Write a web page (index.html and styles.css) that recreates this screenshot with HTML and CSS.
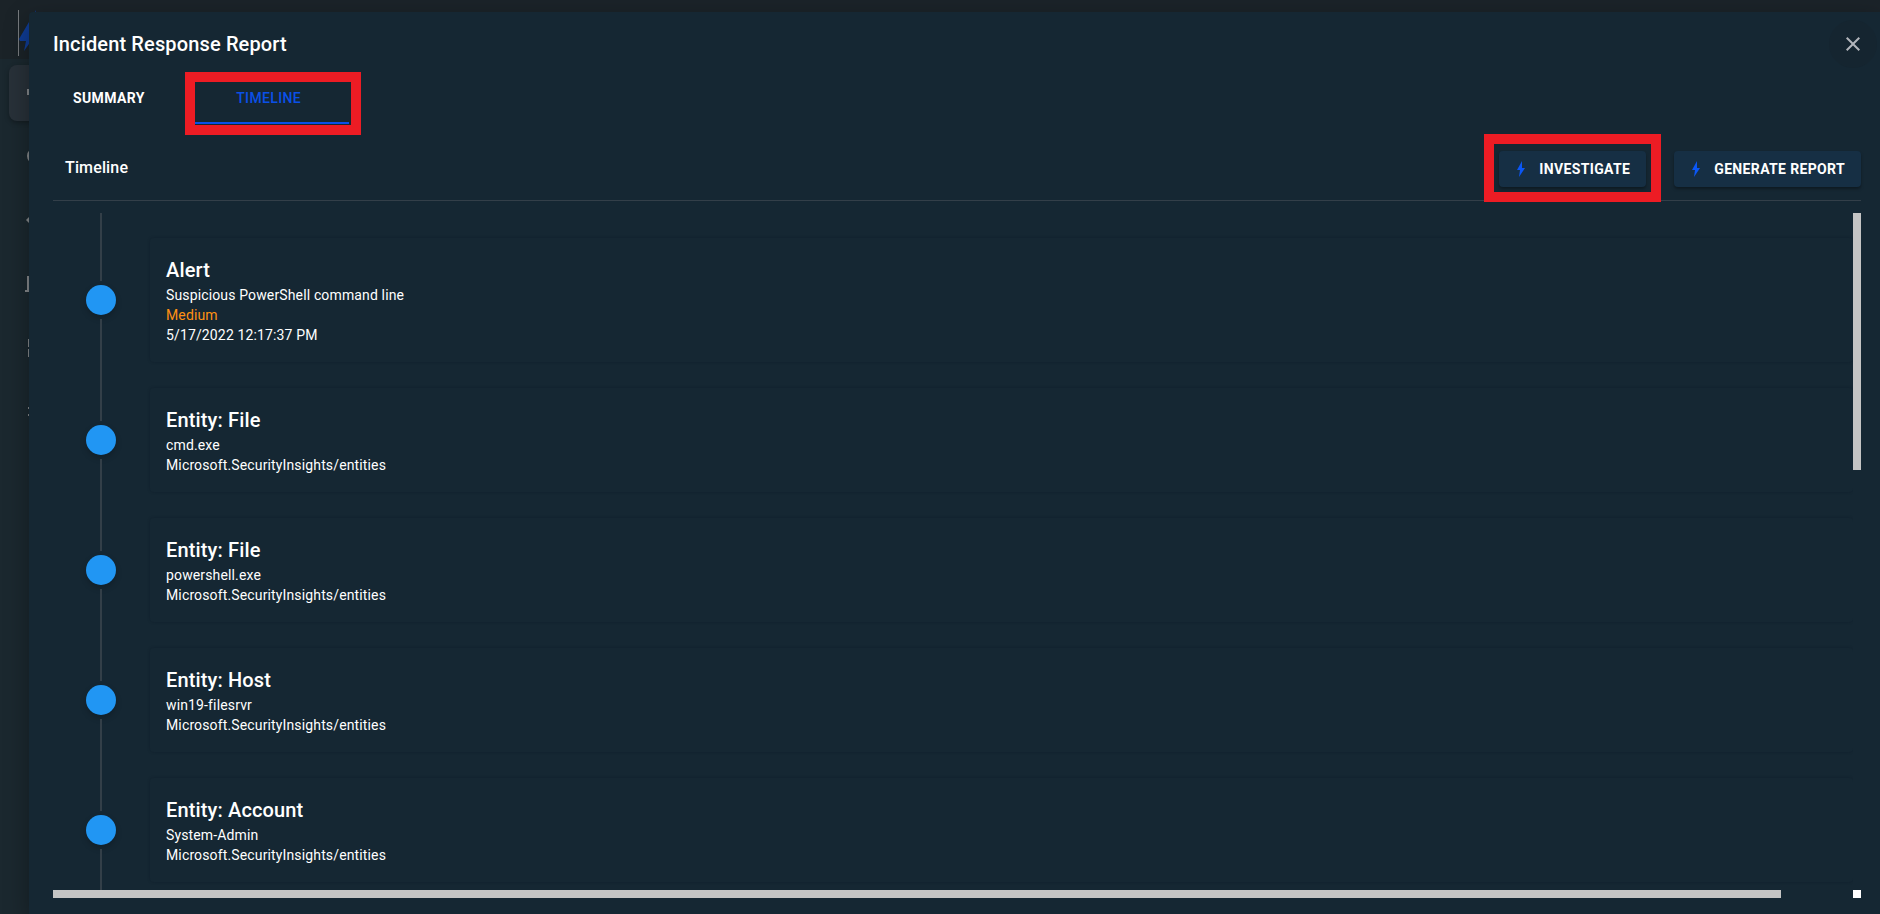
FILE: index.html
```html
<!DOCTYPE html>
<html lang="en">
  <head>
    <meta charset="UTF-8" />
    <meta name="viewport" content="width=device-width, initial-scale=1.0" />
    <title>Incident Response Report</title>
    <link rel="stylesheet" href="styles.css">
  </head>
  <body>
    <!-- App shell behind the dialog -->
    <aside class="sidebar">
      <div class="brand">
        <svg width="24" height="46" viewBox="0 0 24 46"><path d="M17 0 0 29l1 2h6L5 41l17-24h-8z" fill="#0f3c95" /></svg>
      </div>
      <nav class="side-nav">
        <a class="side-link active" href="#" aria-label="Home">
          <svg viewBox="0 0 24 24"><path d="M2 8h20v6H2z" /></svg>
        </a>
        <a class="side-link" href="#" aria-label="Search">
          <svg viewBox="0 0 24 24"><circle cx="10" cy="11" r="7" fill="none" stroke="currentColor" stroke-width="2" /><path d="M15 15l6 6-1 1-6-6z" /></svg>
        </a>
        <a class="side-link" href="#" aria-label="Response">
          <svg viewBox="0 0 24 24"><path d="M1 11l3-3h16l3 3-3 3H4z" /></svg>
        </a>
        <a class="side-link" href="#" aria-label="Reports">
          <svg viewBox="0 0 24 24"><path d="M2 3h20v14h2v2H0v-2h2z" /></svg>
        </a>
        <a class="side-link" href="#" aria-label="Dashboard">
          <svg viewBox="0 0 24 24"><path d="M3 2h8v8H3zm10 0h8v8h-8zM3 12h8v8H3zm10 0h8v8h-8z" /></svg>
        </a>
        <a class="side-link" href="#" aria-label="Settings">
          <svg viewBox="0 0 24 24"><path d="M3 6h3v2H3zm5 0h13v2H8zM3 13h3v2H3zm5 0h13v2H8z" /></svg>
        </a>
      </nav>
    </aside>

    <main class="dialog" role="dialog" aria-labelledby="dialogTitle">
      <header class="dialog-header">
        <h1 id="dialogTitle">Incident Response Report</h1>
        <button type="button" class="close-button" aria-label="Close">
          <svg viewBox="0 0 24 24"><path d="M19 6.41 17.59 5 12 10.59 6.41 5 5 6.41 10.59 12 5 17.59 6.41 19 12 13.41 17.59 19 19 17.59 13.41 12z" /></svg>
        </button>
      </header>

      <div class="tabs" role="tablist">
        <button type="button" class="tab" role="tab" aria-selected="false">SUMMARY</button>
        <div class="marked">
          <button type="button" class="tab selected" role="tab" aria-selected="true">TIMELINE</button>
          <span class="mark mark-tab"></span>
        </div>
      </div>

      <div class="toolbar">
        <h2>Timeline</h2>
        <div class="actions">
          <div class="marked">
            <button type="button" class="button">
              <svg viewBox="0 0 12 16"><path d="M7 0 2 9h3L4 16l6-9H7z" /></svg>
              INVESTIGATE
            </button>
            <span class="mark mark-button"></span>
          </div>
          <button type="button" class="button">
            <svg viewBox="0 0 12 16"><path d="M7 0 2 9h3L4 16l6-9H7z" /></svg>
            GENERATE REPORT
          </button>
        </div>
      </div>

      <div class="scroll-area">
        <ul class="timeline">
          <li class="timeline-item">
            <div class="rail"><span class="dot"></span></div>
            <article class="card">
              <h3>Alert</h3>
              <p>Suspicious PowerShell command line</p>
              <p class="medium">Medium</p>
              <p>5/17/2022 12:17:37 PM</p>
            </article>
          </li>
          <li class="timeline-item">
            <div class="rail"><span class="dot"></span></div>
            <article class="card">
              <h3>Entity: File</h3>
              <p>cmd.exe</p>
              <p>Microsoft.SecurityInsights/entities</p>
            </article>
          </li>
          <li class="timeline-item">
            <div class="rail"><span class="dot"></span></div>
            <article class="card">
              <h3>Entity: File</h3>
              <p>powershell.exe</p>
              <p>Microsoft.SecurityInsights/entities</p>
            </article>
          </li>
          <li class="timeline-item">
            <div class="rail"><span class="dot"></span></div>
            <article class="card">
              <h3>Entity: Host</h3>
              <p>win19-filesrvr</p>
              <p>Microsoft.SecurityInsights/entities</p>
            </article>
          </li>
          <li class="timeline-item">
            <div class="rail"><span class="dot"></span></div>
            <article class="card">
              <h3>Entity: Account</h3>
              <p>System-Admin</p>
              <p>Microsoft.SecurityInsights/entities</p>
            </article>
          </li>
        </ul>
        <div class="track-y"><div class="thumb-y"></div></div>
        <div class="track-x"><div class="thumb-x"></div></div>
        <div class="track-corner"></div>
      </div>
    </main>
  </body>
</html>
```
FILE: styles.css
```css
* {
  box-sizing: border-box;
}
body {
  margin: 0;
  height: 100vh;
  display: flex;
  overflow: hidden;
  background-color: #1b2329;
  color: #fff;
  font-family: Roboto, "Liberation Sans", Arial, sans-serif;
  font-size: 14px;
  letter-spacing: 0.01em;
}
h1,
h2,
h3,
p,
ul {
  margin: 0;
  padding: 0;
}
button {
  font-family: inherit;
  font-size: 14px;
  letter-spacing: 0.025em;
  color: inherit;
  border: none;
  background: none;
  padding: 0;
  cursor: pointer;
}

/* Sidebar, mostly covered by the dialog */
.sidebar {
  flex: 0 0 29px;
  min-width: 0;
  background-color: #1b282f;
}
.brand {
  height: 59px;
  padding: 10px 0 0 18px;
  background-color: #1b2328;
}
.brand svg {
  display: block;
  box-sizing: content-box;
  border-left: 1px solid #777b7e;
}
.side-nav {
  display: flex;
  flex-direction: column;
  gap: 8px;
  padding: 6px 0 0 9px;
}
.side-link {
  display: flex;
  align-items: center;
  justify-content: center;
  width: 56px;
  height: 56px;
  border-radius: 8px;
  color: #85888b;
}
.side-link.active {
  background-color: #283139;
  box-shadow: 0 2px 5px rgba(0, 0, 0, 0.3);
}
.side-link svg {
  width: 24px;
  height: 24px;
  fill: currentColor;
}

/* Dialog */
.dialog {
  position: relative;
  flex: 1;
  min-width: 0;
  display: flex;
  flex-direction: column;
  margin-top: 12px;
  padding: 8px 19px 16px 24px;
  background-color: #152733;
  border-radius: 4px 0 0 0;
  box-shadow: 0 8px 24px rgba(0, 0, 0, 0.35);
}
.dialog-header {
  display: flex;
  align-items: center;
  justify-content: space-between;
  height: 48px;
}
h1 {
  font-size: 20px;
  font-weight: 500;
}
.close-button {
  width: 48px;
  height: 48px;
  margin-right: -16px;
  border-radius: 50%;
  background-color: #152530;
  color: #b2b5bb;
}
.close-button svg {
  display: block;
  width: 24px;
  height: 24px;
  margin: auto;
  fill: currentColor;
}

/* Tabs */
.tabs {
  display: flex;
  gap: 24px;
  margin-top: 8px;
}
.tab {
  height: 48px;
  padding: 0 20px 4px;
  font-weight: 700;
}
.tab.selected {
  width: 160px;
  padding-bottom: 2px;
  border-bottom: 2px solid #0a50e8;
  color: #0a50e8;
  font-weight: 500;
}

/* Red highlight frames */
.marked {
  position: relative;
}
.mark {
  position: absolute;
  border: 10px solid #ed1c24;
  pointer-events: none;
}
.mark-tab {
  inset: -4px -12px -11px -4px;
}
.mark-button {
  inset: -17px -15px -15px;
}

/* Toolbar */
.toolbar {
  display: flex;
  align-items: center;
  justify-content: space-between;
  height: 77px;
  padding: 10px 0 0 12px;
  border-bottom: 1px solid #333f49;
}
h2 {
  font-size: 16px;
  font-weight: 500;
}
.actions {
  display: flex;
  gap: 28px;
  margin-top: 3px;
}
.button {
  display: flex;
  align-items: center;
  gap: 12px;
  height: 36px;
  padding: 0 16px;
  border-radius: 4px;
  background-color: #162f44;
  box-shadow: 0 2px 3px rgba(0, 0, 0, 0.35);
  font-weight: 700;
}
.button svg {
  width: 12px;
  height: 16px;
  fill: #0b57f5;
}

/* Timeline */
.scroll-area {
  flex: 1;
  min-height: 0;
  display: grid;
  grid-template-columns: 1fr 8px;
  grid-template-rows: minmax(0, 1fr) 8px;
  margin-top: 12px;
}
.timeline {
  overflow: hidden;
  list-style: none;
}
.timeline-item {
  display: grid;
  grid-template-columns: 96px 1fr;
  column-gap: 1px;
}
.rail {
  display: flex;
  flex-direction: column;
  align-items: center;
  gap: 4px;
}
.rail::before,
.rail::after {
  content: "";
  flex: 1;
  width: 2px;
  background-color: #333f48;
}
.timeline-item:first-child .rail::before {
  flex: 0 0 68px;
}
.dot {
  width: 30px;
  height: 30px;
  border-radius: 50%;
  background-color: #2196f3;
  box-shadow: 0 3px 6px rgba(0, 0, 0, 0.2);
}
.card {
  margin: 13px 0;
  padding: 17px 16px;
  border-radius: 4px;
  box-shadow: 0 0 2px 1px rgba(15, 30, 42, 0.4);
}
.timeline-item:first-child .card {
  margin-top: 25px;
}
h3 {
  font-size: 20px;
  font-weight: 500;
  line-height: 30px;
}
.card p {
  line-height: 20px;
}
.card .medium {
  color: #ff9114;
}

/* Scrollbars */
.thumb-y {
  height: 38%;
  background-color: #c4c4c4;
}
.thumb-x {
  width: 96%;
  height: 8px;
  background-color: #c4c4c4;
}
.track-corner {
  background-color: #fff;
}
```
